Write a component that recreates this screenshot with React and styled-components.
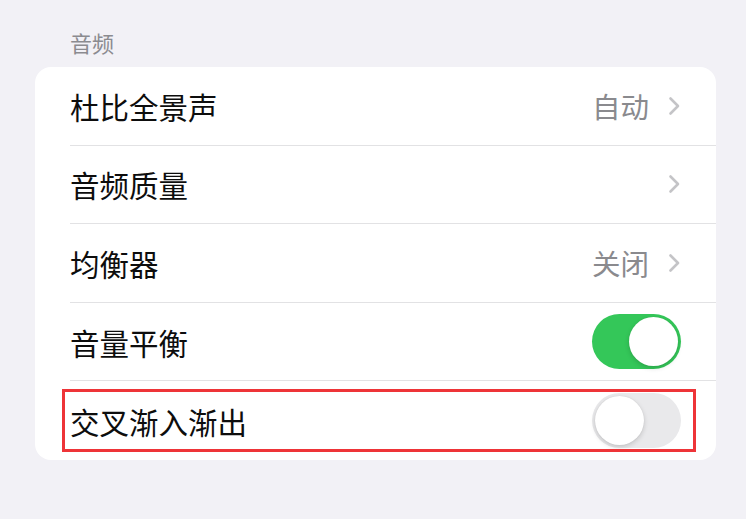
import React from "react";
import styled, { createGlobalStyle } from "styled-components";

const GlobalStyle = createGlobalStyle`
  html, body {
    margin: 0;
    padding: 0;
    background: #f2f1f6;
  }
  body {
    font-family: "Noto Sans CJK SC", "Noto Sans", sans-serif;
  }
`;

const Page = styled.div`
  width: 746px;
  height: 519px;
  padding: 31px 30px 0 35px;
  box-sizing: border-box;
  overflow: hidden;
`;

const SectionTitle = styled.div`
  padding-left: 35px;
  font-size: 22px;
  line-height: 22px;
  color: #8b8b90;
  margin-bottom: 14px;
`;

const Card = styled.div`
  background: #ffffff;
  border-radius: 16px;
  overflow: hidden;
  display: flex;
  flex-direction: column;
`;

const Row = styled.div`
  position: relative;
  height: 78.6px;
  padding-left: 35px;
  display: flex;
`;

const RowInner = styled.div`
  flex: 1;
  display: flex;
  align-items: center;
  padding-right: 35px;
  border-bottom: ${(p) => (p.$last ? "none" : "1.3px solid #e2e2e4")};
`;

const Label = styled.span`
  flex: 1;
  font-size: 29.5px;
  color: #0d0d0d;
  letter-spacing: 0;
`;

const Value = styled.span`
  font-size: 28.5px;
  color: #8a8a8e;
  margin-right: 19px;
`;

const Track = styled.div`
  width: 89px;
  height: 55px;
  border-radius: 28px;
  background: ${(p) => (p.$on ? "#34c759" : "#e9e9eb")};
  display: flex;
  align-items: center;
  justify-content: ${(p) => (p.$on ? "flex-end" : "flex-start")};
  padding: 0 3px;
  box-sizing: border-box;
`;

const Knob = styled.div`
  width: 49px;
  height: 49px;
  border-radius: 50%;
  background: #ffffff;
  box-shadow: 0 2px 5px rgba(0, 0, 0, 0.16), 0 0 1px rgba(0, 0, 0, 0.12);
`;

const Highlight = styled.div`
  position: absolute;
  left: 27px;
  top: 8px;
  width: 634px;
  height: 63px;
  border: 3px solid #ee3438;
  box-sizing: border-box;
  pointer-events: none;
`;

function Chevron() {
  return (
    <svg width="13" height="20" viewBox="0 0 13 20">
      <path
        d="M2.5 2.5 L10 10 L2.5 17.5"
        fill="none"
        stroke="#c4c4c7"
        strokeWidth="2.6"
        strokeLinecap="round"
        strokeLinejoin="round"
      />
    </svg>
  );
}

function Toggle({ on }) {
  return (
    <Track $on={on}>
      <Knob />
    </Track>
  );
}

const rows = [
  { label: "杜比全景声", value: "自动", type: "link" },
  { label: "音频质量", type: "link" },
  { label: "均衡器", value: "关闭", type: "link" },
  { label: "音量平衡", type: "toggle", on: true },
  { label: "交叉渐入渐出", type: "toggle", on: false, marked: true },
];

export default function App() {
  return (
    <>
      <GlobalStyle />
      <Page>
        <SectionTitle>音频</SectionTitle>
        <Card>
          {rows.map((r, i) => (
            <Row key={r.label}>
              <RowInner $last={i === rows.length - 1}>
                <Label>{r.label}</Label>
                {r.value && <Value>{r.value}</Value>}
                {r.type === "link" && <Chevron />}
                {r.type === "toggle" && <Toggle on={r.on} />}
              </RowInner>
              {r.marked && <Highlight />}
            </Row>
          ))}
        </Card>
      </Page>
    </>
  );
}
